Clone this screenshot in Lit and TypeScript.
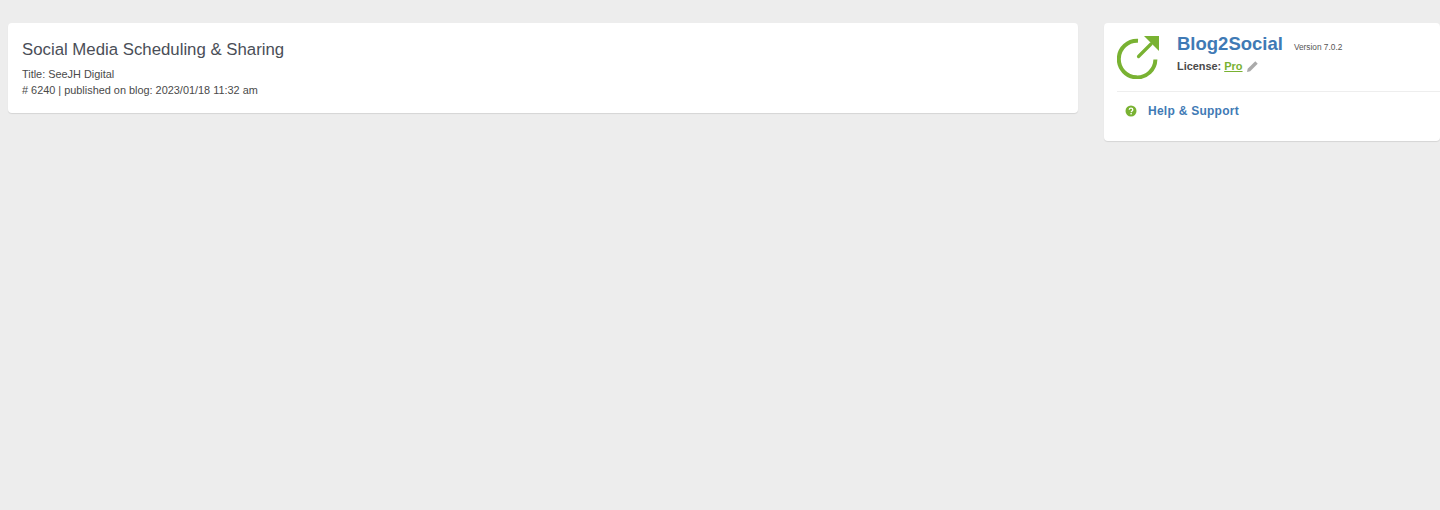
import { LitElement, html, css } from "lit";
import { customElement } from "lit/decorators.js";

@customElement("app-root")
export class AppRoot extends LitElement {
  static styles = css`
    :host { display: block; height: 510px; background: #ededed; overflow: hidden; font-family: "Liberation Sans", Arial, sans-serif; color: #444; }
    .page { display: flex; align-items: flex-start; gap: 26px; padding: 23px 0 0 8px; }
    .card { background: #fff; border-radius: 4px; box-shadow: 0 1px 1px rgba(0,0,0,.1); box-sizing: border-box; }
    .main { width: 1070px; height: 90px; padding: 17px 14px 0; }
    h1 { margin: 0 0 6px; font-size: 16.8px; line-height: 20px; font-weight: 400; color: #4a4e57; }
    .meta { font-size: 10.9px; line-height: 16px; color: #4a4a4a; }
    .side { flex: 1; height: 118px; padding: 11px 0 0 13px; }
    .head { display: flex; gap: 18px; height: 57px; border-bottom: 1px solid #eee; }
    .logo { width: 42px; height: 44px; flex: none; margin-top: 1px; }
    .title-row { display: flex; align-items: baseline; gap: 11px; }
    .name { font-size: 18.5px; line-height: 20px; font-weight: 700; color: #3f7ab5; }
    .ver { font-size: 8.3px; color: #555; }
    .lic { display: flex; align-items: center; font-size: 10.9px; line-height: 14px; font-weight: 700; color: #4a4a4a; margin-top: 5px; }
    .lic a { color: #79b232; text-decoration: underline; margin-left: 3px; font-size: 11px; }
    .pen { width: 13px; height: 13px; margin-left: 3px; }
    .help { display: flex; align-items: center; padding: 12px 0 0 8px; font-size: 12px; line-height: 14px; font-weight: 700; color: #3f7ab5; letter-spacing: .26px; }
    .q { width: 12px; height: 12px; margin-right: 11px; flex: none; }
  `;
  render() {
    return html`<div class="page">
      <section class="card main">
        <h1>Social Media Scheduling &amp; Sharing</h1>
        <div class="meta">Title: SeeJH Digital<br># 6240 | published on blog: 2023/01/18 11:32 am</div>
      </section>
      <aside class="card side">
        <div class="head">
          <svg class="logo" viewBox="0 0 42 44" fill="none">
            <path d="M38.4 24.5A18.3 18.3 0 1 1 21 5.8" stroke="#79b232" stroke-width="4"/>
            <path d="M21.5 21.5L34 9" stroke="#79b232" stroke-width="3.2" stroke-linecap="round"/>
            <path d="M27 1H42V16Z" fill="#79b232"/>
          </svg>
          <div>
            <div class="title-row"><span class="name">Blog2Social</span><span class="ver">Version 7.0.2</span></div>
            <div class="lic">License: <a>Pro</a>
              <svg class="pen" viewBox="0 0 13 13"><path d="M1 12l.7-3.2L9.3 1.3l2.4 2.4L4.2 11.3z" fill="#aaa"/></svg>
            </div>
          </div>
        </div>
        <div class="help">
          <svg class="q" viewBox="0 0 12 12">
            <circle cx="6" cy="6" r="5.5" fill="#79b232"/>
            <path d="M4.2 4.7C4.3 3.7 5 3.2 6 3.2c1 0 1.8.6 1.8 1.5 0 1.2-1.5 1.2-1.6 2.4" fill="none" stroke="#fff" stroke-width="1.3"/>
            <rect x="5.4" y="8" width="1.4" height="1.4" fill="#fff"/>
          </svg>
          Help &amp; Support
        </div>
      </aside>
    </div>`;
  }
}
